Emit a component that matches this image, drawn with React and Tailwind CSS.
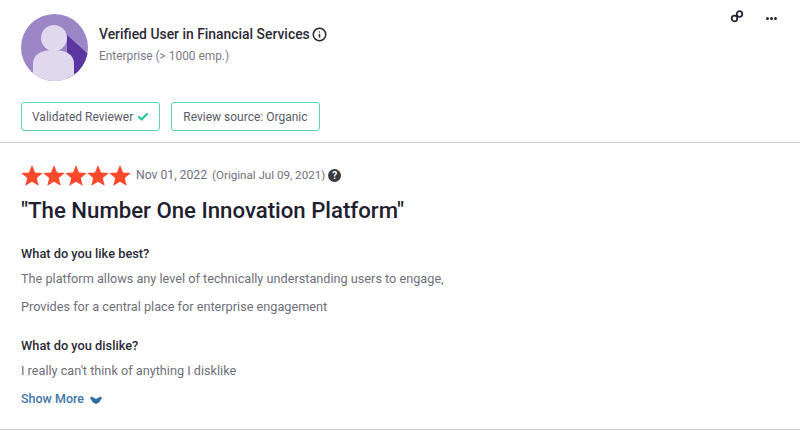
import React from 'react';
import { Check, Info } from 'lucide-react';

const Star = () => (
  <svg width="22" height="21" viewBox="0 0 22 21">
    <path d="M11 0l3 7.4 7.8.6-6 5.1 1.9 7.7L11 16.7l-6.700 4.100 1.900-7.700-6-5.100L8 7.400z" fill="#ff492c" />
  </svg>
);

const Avatar = () => (
  <svg width="67" height="67" viewBox="0 0 67 67" className="shrink-0">
    <defs>
      <clipPath id="round">
        <circle cx="33.500" cy="33.500" r="33.500" />
      </clipPath>
    </defs>
    <g clipPath="url(#round)">
      <rect width="67" height="67" fill="#9d86c6" />
      <path d="M46 21L67 40V67H46z" fill="#5b36a0" />
      <circle cx="33" cy="24" r="13" fill="#e0d8ec" />
      <path d="M12 67V50c0-9 7-14 20.500-14S53 41 53 50v17z" fill="#e0d8ec" />
    </g>
  </svg>
);

export default function App() {
  return (
    <div className="h-[430px] w-[800px] overflow-hidden bg-white font-['Roboto',sans-serif]">
      <div className="h-[143px] border-b border-[#cfcfcf] px-[21px] pt-[14px]">
        <div className="flex h-[67px] items-start">
          <Avatar />
          <div className="ml-[11px] pt-[10px]">
            <div className="flex items-center gap-[2px] text-[13.900px] font-medium leading-[20px] text-[#2b2b36]">
              Verified User in Financial Services
              <Info size={15} strokeWidth={2.500} />
            </div>
            <div className="mt-[2px] text-[11.900px] leading-[20px] text-[#7b7b86]">Enterprise (&gt; 1000 emp.)</div>
          </div>
          <div className="ml-auto mr-[2px] flex items-center gap-[22px] text-[#25253a]">
            <svg width="14" height="13" viewBox="0 0 14 13" fill="none" stroke="#25253a" strokeWidth="1.800" className="-mt-[4px]">
              <circle cx="4.500" cy="8.500" r="2.800" />
              <circle cx="9.500" cy="4" r="2.800" />
            </svg>
            <div className="flex gap-[1px]">
              <span className="h-[3px] w-[3px] rounded-full bg-[#25253a]" />
              <span className="h-[3px] w-[3px] rounded-full bg-[#25253a]" />
              <span className="h-[3px] w-[3px] rounded-full bg-[#25253a]" />
            </div>
          </div>
        </div>
        <div className="mt-[21px] flex gap-[11px]">
          <div className="flex h-[29px] items-center gap-[4px] rounded-[3px] border border-[#5ad6b6] px-[10px] text-[12px] text-[#5b5b66]">
            Validated Reviewer
            <Check size={12} strokeWidth={4.500} className="text-[#27c8a0]" />
          </div>
          <div className="flex h-[29px] items-center rounded-[3px] border border-[#5ad6b6] px-[11px] text-[12px] text-[#5b5b66]">
            Review source: Organic
          </div>
        </div>
      </div>

      <div className="h-[287px] border-b border-[#cfcfcf] px-[21px] pt-[22px]">
        <div className="flex h-[21px] items-center">
          <div className="flex">
            <Star />
            <Star />
            <Star />
            <Star />
            <Star />
          </div>
          <span className="ml-[5px] text-[12.200px] text-[#6f6f7a]">Nov 01, 2022</span>
          <span className="ml-[5px] text-[11.600px] text-[#6f6f7a]">(Original Jul 09, 2021)</span>
          <span className="ml-[3px] flex h-[13px] w-[13px] items-center justify-center rounded-full bg-[#3a3a42] text-[10px] font-bold text-white">?</span>
        </div>
        <h1 className="mt-[10px] text-[22.200px] font-medium leading-[28px] text-[#20202e]">"The Number One Innovation Platform"</h1>
        <div className="mt-[20px] text-[12.800px] font-medium leading-[20px] text-[#2b2b36]">What do you like best?</div>
        <p className="mt-[5px] text-[12.700px] leading-[20px] text-[#6f6f7a]">The platform allows any level of technically understanding users to engage,</p>
        <p className="mt-[8px] text-[12.700px] leading-[20px] text-[#6f6f7a]">Provides for a central place for enterprise engagement</p>
        <div className="mt-[19px] text-[12.800px] font-medium leading-[20px] text-[#2b2b36]">What do you dislike?</div>
        <p className="mt-[5px] text-[12.700px] leading-[20px] text-[#6f6f7a]">I really can't think of anything I disklike</p>
        <div className="mt-[8px] flex items-center gap-[6px] text-[12.500px] font-medium leading-[20px] text-[#3f77a8]">
          Show More
          <svg width="12" height="8" viewBox="0 0 12 8" className="mt-[2px]">
            <path d="M0 2L1.500 0.500 6 3 10.500 0.500 12 2 9 6.500 6 8 3 6.500z" fill="#2f6ca3" />
          </svg>
        </div>
      </div>
    </div>
  );
}
